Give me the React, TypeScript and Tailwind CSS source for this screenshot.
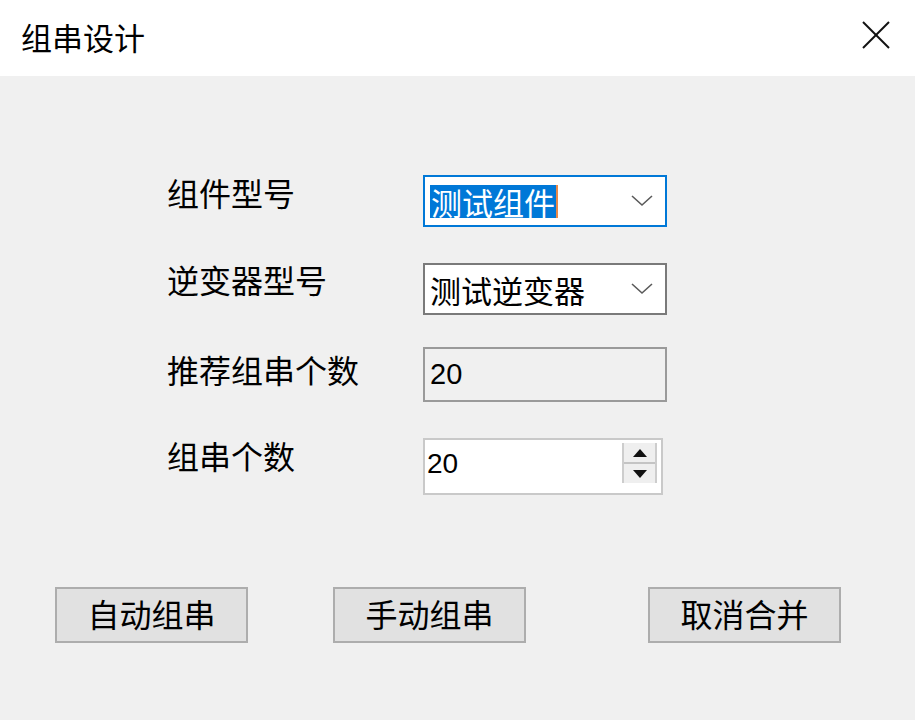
import React from "react";

const cjk = "font-['Noto_Sans_CJK_SC',sans-serif]";

const Chevron = () => (
  <svg width="22" height="12" viewBox="0 0 22 12" className="shrink-0">
    <polyline points="1,1 11,10 21,1" fill="none" stroke="#5a5a5a" strokeWidth="1.6" />
  </svg>
);

const App: React.FC = () => {
  return (
    <div className={`w-[915px] h-[720px] bg-[#f0f0f0] flex flex-col text-black ${cjk}`}>
      {/* 标题栏 */}
      <div className="h-[76px] bg-white flex items-center justify-between pl-[21px] pr-[24px] shrink-0">
        <span className="text-[31px] leading-none mt-[-3px]">组串设计</span>
        <svg width="30" height="30" viewBox="0 0 30 30" className="mt-[-6px]">
          <line x1="2" y1="2" x2="28" y2="28" stroke="#111" strokeWidth="2" />
          <line x1="28" y1="2" x2="2" y2="28" stroke="#111" strokeWidth="2" />
        </svg>
      </div>

      {/* 表单 */}
      <div className="flex flex-col pl-[167px] pt-[99px]">
        {/* 组件型号 */}
        <div className="flex items-start">
          <span className="w-[256px] text-[32px] leading-[32px] mt-[1px]">组件型号</span>
          <div className="w-[244px] h-[52px] border-2 border-[#0078d7] bg-white flex items-center justify-between pl-[5px] pr-[12px]">
            <div className="flex items-center">
              <span className="bg-[#0078d7] text-white text-[31px] leading-[33px] h-[33px] px-[1px]">测试组件</span>
              <span className="w-[2px] h-[33px] bg-[#e8894a]" />
            </div>
            <Chevron />
          </div>
        </div>

        {/* 逆变器型号 */}
        <div className="flex items-start mt-[36px]">
          <span className="w-[256px] text-[32px] leading-[32px]">逆变器型号</span>
          <div className="w-[244px] h-[52px] border-2 border-[#7a7a7a] bg-white flex items-center justify-between pl-[5px] pr-[12px]">
            <span className="text-[31px] leading-[33px]">测试逆变器</span>
            <Chevron />
          </div>
        </div>

        {/* 推荐组串个数 */}
        <div className="flex items-start mt-[32px]">
          <span className="w-[256px] text-[32px] leading-[32px] mt-[6px]">推荐组串个数</span>
          <div className="w-[244px] h-[55px] border-2 border-[#9a9a9a] bg-[#f0f0f0] flex items-center pl-[5px]">
            <span className="font-['Liberation_Sans',sans-serif] text-[29px] leading-none">20</span>
          </div>
        </div>

        {/* 组串个数 */}
        <div className="flex items-start mt-[36px]">
          <span className="w-[256px] text-[32px] leading-[32px] mt-[1px]">组串个数</span>
          <div className="w-[240px] h-[57px] border-2 border-[#c9c9c9] bg-white flex items-start justify-between pl-[2px] pr-[4px]">
            <span className="font-['Liberation_Sans',sans-serif] text-[28px] leading-none mt-[10px]">20</span>
            <div className="w-[35px] h-[40px] mt-[3px] flex flex-col border-x-2 border-[#cdcdcd] bg-[#efefef]">
              <div className="flex-1 flex items-center justify-center border-b-2 border-[#c4c4c4]">
                <svg width="14" height="8" viewBox="0 0 14 8">
                  <polygon points="7,0 14,8 0,8" fill="#111" />
                </svg>
              </div>
              <div className="flex-1 flex items-center justify-center">
                <svg width="14" height="8" viewBox="0 0 14 8">
                  <polygon points="0,0 14,0 7,8" fill="#111" />
                </svg>
              </div>
            </div>
          </div>
        </div>
      </div>

      {/* 按钮 */}
      <div className="flex items-start mt-[92px] pl-[55px]">
        <button className="w-[193px] h-[56px] bg-[#e1e1e1] border-2 border-[#adadad] text-[32px] leading-none pb-[4px]">
          自动组串
        </button>
        <button className="w-[193px] h-[56px] bg-[#e1e1e1] border-2 border-[#adadad] text-[32px] leading-none pb-[4px] ml-[85px]">
          手动组串
        </button>
        <button className="w-[193px] h-[56px] bg-[#e1e1e1] border-2 border-[#adadad] text-[32px] leading-none pb-[4px] ml-[122px]">
          取消合并
        </button>
      </div>
    </div>
  );
};

export default App;
